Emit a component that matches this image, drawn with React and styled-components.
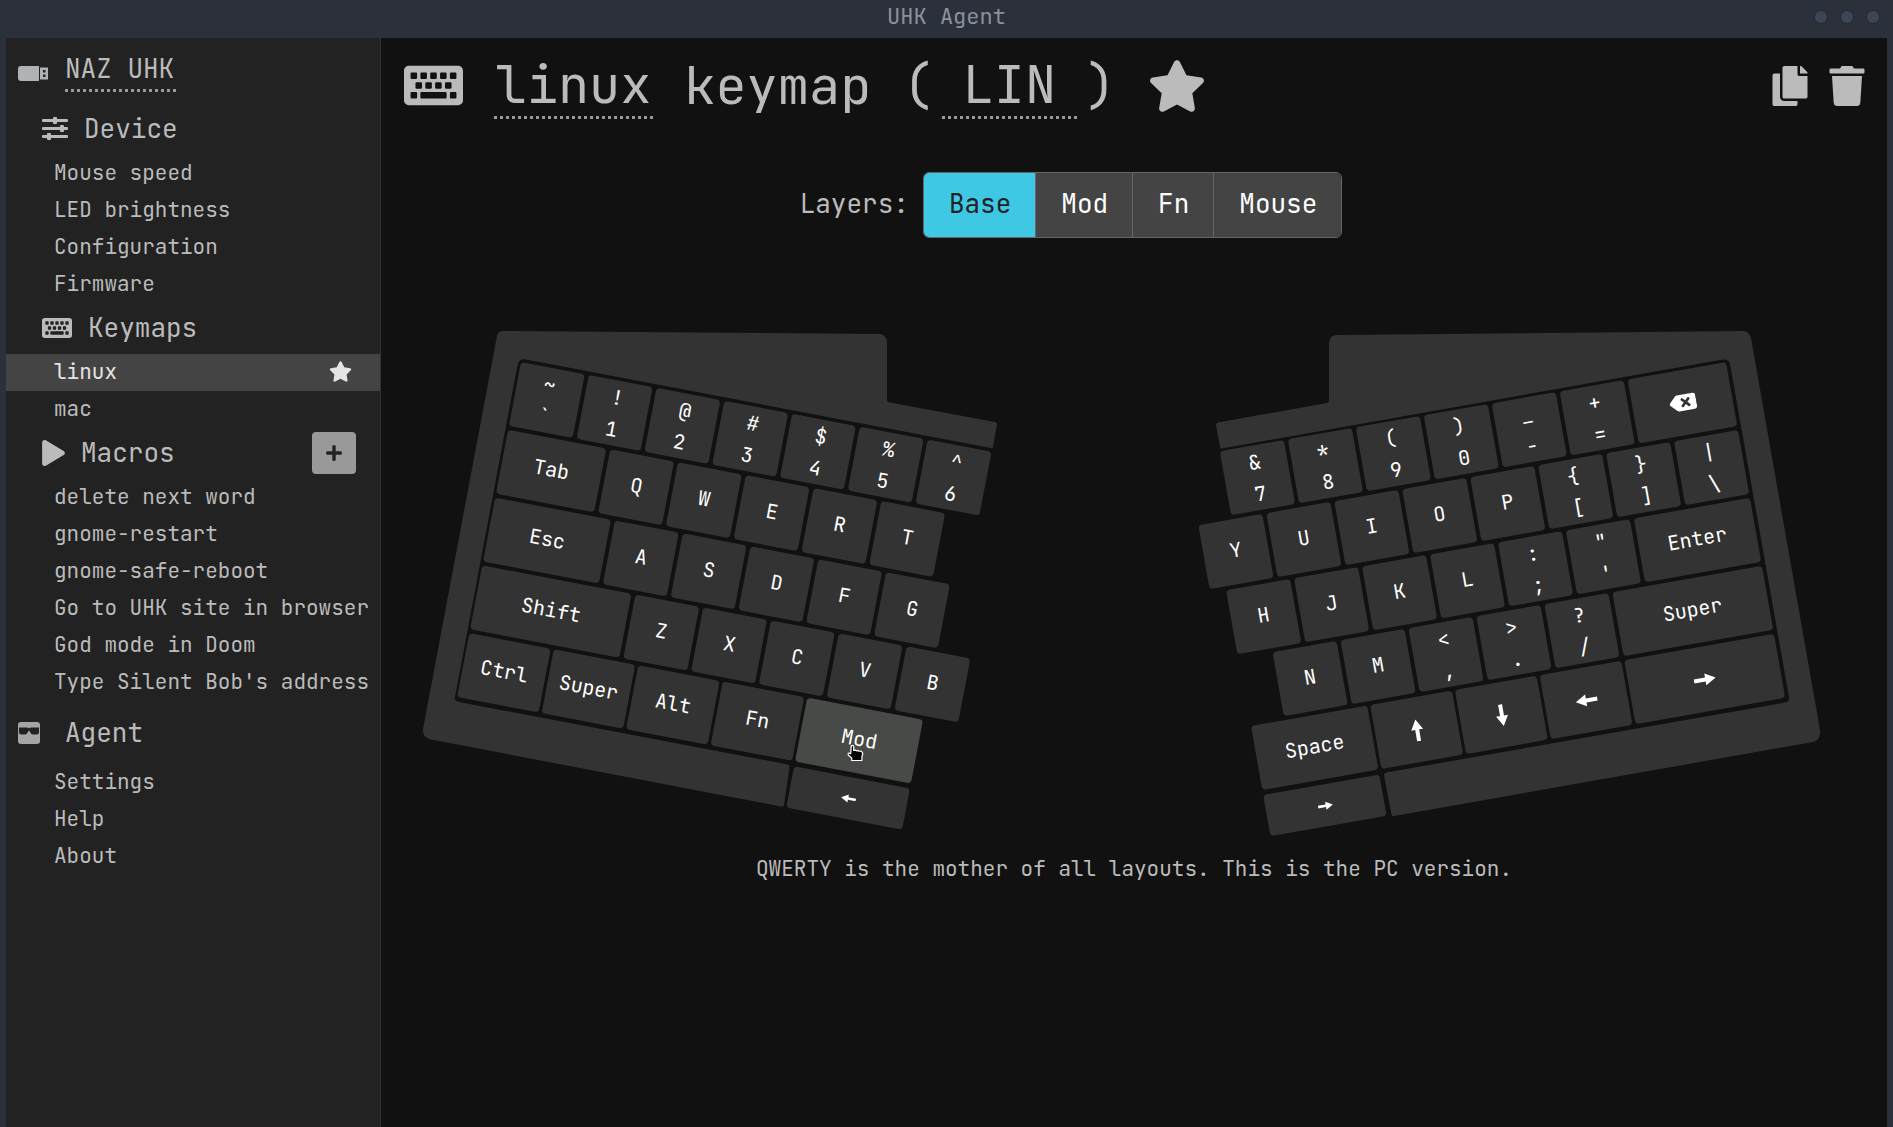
import React from "react";
import styled, { createGlobalStyle, css } from "styled-components";
import { FaKeyboard, FaStar, FaPlay, FaPlus, FaCopy, FaTrash, FaBackspace } from "react-icons/fa";

const GlobalStyle = createGlobalStyle`
  *, *::before, *::after { box-sizing: border-box; }
  body {
    margin: 0;
    background: #111;
    color: #bbb;
    font-family: "JetBrains Mono", "DejaVu Sans Mono", "Liberation Mono", monospace;
    font-size: 21px;
  }
  button, input { font-family: inherit; }
`;

const Window = styled.div`
  display: flex;
  flex-direction: column;
  min-height: 100vh;
  background: #2c303b;
`;

const TitleBar = styled.header`
  display: grid;
  grid-template-columns: 1fr auto 1fr;
  align-items: center;
  height: 38px;
  padding: 0 13px 4px;
  font-size: 22px;
  line-height: 32px;
  color: #8a919d;
`;

const WindowControls = styled.div`
  grid-column: 3;
  display: flex;
  justify-content: flex-end;
  gap: 12px;
`;

const WindowDot = styled.button`
  width: 14px;
  height: 14px;
  padding: 0;
  border: 1px solid #242833;
  border-radius: 50%;
  background: #3d4656;
`;

const AppTitle = styled.span`
  grid-column: 2;
`;

const Body = styled.div`
  display: flex;
  flex: 1;
  padding: 0 6px;
`;

const Sidebar = styled.nav`
  flex: 0 0 375px;
  min-width: 0;
  background: #222;
  border-right: 1px solid #333;
`;

const dotted = css`
  background: repeating-linear-gradient(to right, #999 0 3px, transparent 3px 6px) left bottom / 100% 3px no-repeat;
`;

const DeviceRow = styled.div`
  display: flex;
  align-items: flex-start;
  height: 66px;
  padding: 10px 12px 0;
`;

const IconSlot = styled.span`
  display: flex;
  align-items: center;
  width: 47px;
  height: 52px;
`;

const DeviceName = styled.input`
  width: 113px;
  height: 44px;
  padding: 0 0 3px;
  border: 0;
  outline: 0;
  color: #bbb;
  font-size: 26px;
  line-height: 36px;
  ${dotted}
`;

const Heading = styled.h2`
  display: flex;
  align-items: center;
  gap: 16px;
  height: 51px;
  margin: 0;
  padding: 0 24px 2px 36px;
  font-size: 26px;
  font-weight: 400;
  line-height: 48px;
`;

const PlayIcon = styled(FaPlay)`
  width: 23px;
  height: 26px;
`;

const AgentHeading = styled.h2`
  display: flex;
  align-items: center;
  height: 63px;
  margin: 0;
  padding: 0 12px;
  font-size: 26px;
  font-weight: 400;
  line-height: 48px;
`;

const AddButton = styled.button`
  display: flex;
  align-items: center;
  justify-content: center;
  width: 44px;
  height: 42px;
  margin-left: auto;
  padding: 0;
  border: 0;
  border-radius: 4px;
  background: #999;
  color: #222;
`;

const List = styled.ul`
  margin: 0;
  padding: 0;
  list-style: none;
`;

const ItemLink = styled.a`
  display: flex;
  align-items: center;
  justify-content: space-between;
  height: 37px;
  padding: 0 8px 2px 48px;
  line-height: 34px;
  white-space: nowrap;
  text-decoration: none;
  color: ${(p) => (p.$active ? "#e4e4e4" : "#bbb")};
  background: ${(p) => (p.$active ? "#444" : "transparent")};
`;

const DefaultStar = styled(FaStar)`
  margin-right: 20px;
`;

const Main = styled.main`
  flex: 1;
  min-width: 0;
  background: #111;
`;

const Header = styled.div`
  display: flex;
  align-items: center;
  justify-content: space-between;
  padding: 14px 20px 0 23px;
`;

const Title = styled.h1`
  display: flex;
  align-items: center;
  margin: 0;
  font-size: 52px;
  font-weight: 400;
  line-height: 60px;
  white-space: pre;
`;

const TitleInput = styled.input`
  width: ${(p) => p.$width}px;
  height: 67px;
  padding: 0 0 3px;
  border: 0;
  outline: 0;
  color: #bbb;
  font-size: 52px;
  text-align: center;
  ${dotted}
`;

const NameField = styled.span`
  display: flex;
  margin: 0 0 0 31px;
`;

const AbbrField = styled.span`
  display: flex;
  margin: 0 8px;
`;

const StarSlot = styled.span`
  display: flex;
  margin-left: 32px;
`;

const Actions = styled.div`
  display: flex;
  gap: 17px;
`;

const IconButton = styled.button`
  display: flex;
  padding: 0;
  border: 0;
  background: transparent;
  color: #bbb;
`;

const Layers = styled.div`
  display: flex;
  align-items: center;
  justify-content: center;
  gap: 14px;
  margin: 53px 126px 93px 0;
  font-size: 26px;
`;

const LayersLabel = styled.span`
  padding-bottom: 4px;
`;

const LayerGroup = styled.div`
  display: flex;
  border: 1px solid #666;
  border-radius: 6px;
  overflow: hidden;
`;

const LayerButton = styled.button`
  height: 64px;
  padding: 0 24px 4px 25px;
  border: 0;
  border-left: ${(p) => (p.$first ? "0" : "1px solid #666")};
  font-size: 26px;
  color: ${(p) => (p.$active ? "#222" : "#fff")};
  background: ${(p) => (p.$active ? "#3ec8e4" : "#444")};
`;

const Keyboard = styled.section`
  display: flex;
  flex-wrap: wrap;
  justify-content: center;
`;

const Half = styled.div`
  position: relative;
  flex: 0 0 711px;
  height: 520px;
  display: flex;
  justify-content: ${(p) => (p.$side === "left" ? "flex-start" : "flex-end")};
  padding: ${(p) => (p.$side === "left" ? "31px 0 0 98px" : "31px 119px 0 0")};
`;

const Case = styled.svg`
  position: absolute;
  inset: 0;
  width: 100%;
  height: 100%;
  fill: #333;
`;

const KeyGrid = styled.div`
  position: relative;
  display: flex;
  flex-direction: column;
  align-items: ${(p) => (p.$side === "left" ? "flex-start" : "flex-end")};
  gap: 4px;
  height: 0;
  transform-origin: top ${(p) => p.$side};
  transform: rotate(${(p) => (p.$side === "left" ? "10.8deg" : "-10deg")});
`;

const KeyRow = styled.div`
  display: flex;
  gap: ${(p) => (p.$tight ? 3 : 4)}px;
`;

const ThumbRow = styled.div`
  padding: ${(p) => (p.$side === "left" ? "1px 0 0 344px" : "1px 413px 0 0")};
`;

const Key = styled.button`
  position: relative;
  display: flex;
  flex-direction: column;
  align-items: center;
  justify-content: center;
  width: ${(p) => p.$width || 65}px;
  height: ${(p) => (p.$short ? 42 : 65)}px;
  padding: 0 0 ${(p) => (p.$single ? 3 : 0)}px;
  border: 0;
  border-radius: 4px;
  background: ${(p) => (p.$hovered ? "#484a47" : "#333")};
  color: #fff;
  font-size: 20px;
  line-height: 32px;
`;

const Pointer = styled.svg`
  position: absolute;
  left: 50%;
  top: 50%;
  transform: rotate(-10.8deg) translate(-10px, 2px);
`;

const Description = styled.p`
  margin: 0;
  padding: 0 24px;
  line-height: 36px;
  text-align: center;
`;

const UsbIcon = () => (
  <svg width="30" height="16" viewBox="0 0 30 16" aria-hidden="true">
    <path d="M3 0h18v15H3a3 3 0 0 1-3-3V3a3 3 0 0 1 3-3z" fill="#afb3b4" />
    <path fillRule="evenodd" d="M22 1.500h8v12h-8zM25 4v2.500h2.500V4zM25 8.500V11h2.500V8.500z" fill="#afb3b4" />
  </svg>
);

const SlidersIcon = () => (
  <svg width="26" height="24" viewBox="0 0 26 24" fill="#bbb" aria-hidden="true">
    <rect y="2" width="26" height="3" rx="1" />
    <rect y="10" width="26" height="3" rx="1" />
    <rect y="18" width="26" height="3" rx="1" />
    <rect x="11" width="4" height="7" rx="1" />
    <rect x="18" y="8" width="4" height="7" rx="1" />
    <rect x="5" y="16" width="4" height="7" rx="1" />
  </svg>
);

const AgentIcon = () => (
  <svg width="22" height="22" viewBox="0 0 22 22" aria-hidden="true">
    <rect width="22" height="22" rx="3" fill="#a5a5a5" />
    <path
      d="M1 5.500h8.500l1.500 1 1.500-1H21v4.500q0 2.500-2.500 2.500h-3.500q-2 0-2.700-2.200L11.300 8.800h-.6L9.700 10.300Q9 12.500 7 12.500H3.500Q1 12.500 1 10z"
      fill="#222"
    />
  </svg>
);

const turns = { right: 0, down: 90, left: 180, up: 270 };

const Arrow = ({ dir, size = 22 }) => (
  <svg width={size} height={size} viewBox="0 0 22 22" fill="#fff" role="img" aria-label={dir}>
    <path d="M0 9h11.500V5L22 11l-10.500 6v-4H0z" transform={`rotate(${turns[dir]} 11 11)`} />
  </svg>
);

const HandPointer = () => (
  <Pointer width="17" height="17" viewBox="0 0 17 17" aria-hidden="true">
    <path
      d="M4 1.500q1.500-1.500 2.500.3V6l1.700-.4 1 .8 1.600-.5 1 .9 1.700-.3 1.300 1q.7.500.7 2l-.8 3V16H4.500v-2.500L1 10.500q-.8-1.800 1-2l1.500.8z"
      fill="#050505"
      stroke="#fff"
      strokeWidth="1.200"
      strokeLinejoin="round"
    />
  </Pointer>
);

const single = (labels) => labels.split("").map((c) => ({ t: [c] }));
const pairs = (...list) => list.map((s) => ({ t: s.split("") }));
const text = (t, w, extra) => ({ t: [t], w, ...extra });
const arrow = (dir, w, extra) => ({ icon: <Arrow dir={dir} size={extra ? 15 : 22} />, label: dir, w, ...extra });

const leftRows = [
  pairs("~`", "!1", "@2", "#3", "$4", "%5", "^6"),
  [text("Tab", 100), ...single("QWERT")],
  [text("Esc", 118), ...single("ASDFG")],
  [text("Shift", 152), ...single("ZXCVB")],
  [text("Ctrl", 83), text("Super", 83), text("Alt", 83), text("Fn", 83), text("Mod", 118, { hovered: true })],
];

const rightRows = [
  [...pairs("&7", "*8", "(9", ")0", "_-", "+="), { icon: <FaBackspace size={27} />, label: "Backspace", w: 100 }],
  [...single("YUIOP"), ...pairs("{[", "}]", "|\\")],
  [...single("HJKL"), ...pairs(":;", "\"'"), text("Enter", 118)],
  [...single("NM"), ...pairs("<,", ">.", "?/"), text("Super", 152)],
  [text("Space", 118), arrow("up", 83), arrow("down", 83), arrow("left", 83), arrow("right", 152)],
];

const KeyCap = ({ k }) => (
  <Key $width={k.w} $short={k.short} $hovered={k.hovered} $single={k.t && k.t.length === 1} aria-label={k.label}>
    {k.icon}
    {k.t && k.t.map((c) => <span key={c}>{c}</span>)}
    {k.hovered && <HandPointer />}
  </Key>
);

const KeyboardHalf = ({ side, rows, thumb, outline }) => (
  <Half $side={side}>
    <Case viewBox="0 0 711 520" aria-hidden="true">
      <path d={outline} />
    </Case>
    <KeyGrid $side={side}>
      {rows.map((row, i) => (
        <KeyRow key={i} $tight={i === 4}>
          {row.map((k, j) => (
            <KeyCap key={j} k={k} />
          ))}
        </KeyRow>
      ))}
      <ThumbRow $side={side}>
        <KeyCap k={thumb} />
      </ThumbRow>
    </KeyGrid>
  </Half>
);

const leftCase =
  "M80 0L457 3Q464 4 464 12V69Q464 71 467 71.500L572 91Q574 91.500 574 93.500L570 116Q569.500 117.500 568 117L103 28.500Q96 27 94.500 34L32 366Q31 370 36 371L365 433.500Q367 434 366.500 436L361 474Q360.500 476 358 475.500L8 408.500Q-1 406 0 398L74 5Q75 0 80 0Z";

const rightCase =
  "M203 4L609 0Q615 0 617 7L686 399Q687 409 679 411L260 485Q258 485.500 257.500 483.500L250 444Q250 442 252 441.500L651 371.500Q656 370.500 655 366L596 33Q595 28 589 28.500L88 117.500Q86.500 118 86 116L82 94Q82 92 84 91.500L193 72Q195 71.500 195 69V12Q196 4 203 4Z";

const NavList = ({ items }) => (
  <List>
    {items.map((name) => (
      <li key={name}>
        <ItemLink href="#" $active={name === "linux"}>
          {name}
          {name === "linux" && <DefaultStar size={23} />}
        </ItemLink>
      </li>
    ))}
  </List>
);

export default function App() {
  return (
    <Window>
      <GlobalStyle />
      <TitleBar>
        <AppTitle>UHK Agent</AppTitle>
        <WindowControls>
          <WindowDot aria-label="Minimize" />
          <WindowDot aria-label="Maximize" />
          <WindowDot aria-label="Close" />
        </WindowControls>
      </TitleBar>
      <Body>
        <Sidebar>
          <DeviceRow>
            <IconSlot>
              <UsbIcon />
            </IconSlot>
            <DeviceName aria-label="Device name" defaultValue="NAZ UHK" />
          </DeviceRow>
          <Heading>
            <SlidersIcon />
            Device
          </Heading>
          <NavList items={["Mouse speed", "LED brightness", "Configuration", "Firmware"]} />
          <Heading>
            <FaKeyboard size={30} />
            Keymaps
          </Heading>
          <NavList items={["linux", "mac"]} />
          <Heading>
            <PlayIcon />
            Macros
            <AddButton aria-label="Add macro">
              <FaPlus size={18} />
            </AddButton>
          </Heading>
          <NavList
            items={[
              "delete next word",
              "gnome-restart",
              "gnome-safe-reboot",
              "Go to UHK site in browser",
              "God mode in Doom",
              "Type Silent Bob's address",
            ]}
          />
          <AgentHeading>
            <IconSlot>
              <AgentIcon />
            </IconSlot>
            Agent
          </AgentHeading>
          <NavList items={["Settings", "Help", "About"]} />
        </Sidebar>
        <Main>
          <Header>
            <Title>
              <FaKeyboard size={59} />
              <NameField>
                <TitleInput $width={159} aria-label="Keymap name" defaultValue="linux" />
              </NameField>
              <span>{" keymap ("}</span>
              <AbbrField>
                <TitleInput $width={135} aria-label="Keymap abbreviation" defaultValue="LIN" />
              </AbbrField>
              <span>)</span>
              <StarSlot>
                <FaStar size={58} />
              </StarSlot>
            </Title>
            <Actions>
              <IconButton aria-label="Duplicate keymap">
                <FaCopy size={40} />
              </IconButton>
              <IconButton aria-label="Delete keymap">
                <FaTrash size={40} />
              </IconButton>
            </Actions>
          </Header>
          <Layers>
            <LayersLabel>Layers:</LayersLabel>
            <LayerGroup>
              <LayerButton $first $active>
                Base
              </LayerButton>
              <LayerButton>Mod</LayerButton>
              <LayerButton>Fn</LayerButton>
              <LayerButton>Mouse</LayerButton>
            </LayerGroup>
          </Layers>
          <Keyboard>
            <KeyboardHalf side="left" rows={leftRows} thumb={arrow("left", 118, { short: true })} outline={leftCase} />
            <KeyboardHalf side="right" rows={rightRows} thumb={arrow("right", 118, { short: true })} outline={rightCase} />
          </Keyboard>
          <Description>QWERTY is the mother of all layouts. This is the PC version.</Description>
        </Main>
      </Body>
    </Window>
  );
}
